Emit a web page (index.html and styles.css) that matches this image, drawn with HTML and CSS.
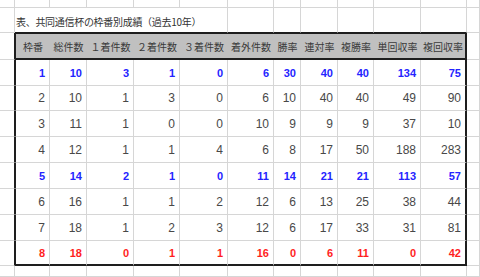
FILE: index.html
```html
<!DOCTYPE html>
<html lang="ja">
<head>
<meta charset="utf-8">
<link rel="stylesheet" href="styles.css">
</head>
<body>
<div class="sheet">
  <!-- row 0 -->
  <div class="c"></div><div class="c"></div><div class="c"></div><div class="c"></div><div class="c"></div><div class="c"></div><div class="c"></div><div class="c"></div><div class="c"></div><div class="c"></div><div class="c"></div><div class="c"></div><div class="c"></div>
  <!-- title row -->
  <div class="c"></div>
  <div class="c title">表、共同通信杯の枠番別成績（過去10年）</div>
  <div class="c tb"></div><div class="c tb"></div><div class="c tb"></div><div class="c tb"></div><div class="c tb"></div><div class="c tb"></div>
  <div class="c"></div>
  <!-- header -->
  <div class="c la"></div>
  <div class="h lb">枠番</div><div class="h">総件数</div><div class="h">１着件数</div><div class="h">２着件数</div><div class="h">３着件数</div><div class="h">着外件数</div><div class="h">勝率</div><div class="h">連対率</div><div class="h">複勝率</div><div class="h">単回収率</div><div class="h rb">複回収率</div>
  <div class="c"></div>
  <!-- data 1 -->
  <div class="c la"></div>
  <div class="c n blue lb">1</div><div class="c n blue">10</div><div class="c n blue">3</div><div class="c n blue">1</div><div class="c n blue">0</div><div class="c n blue">6</div><div class="c n blue">30</div><div class="c n blue">40</div><div class="c n blue">40</div><div class="c n blue">134</div><div class="c n blue rb">75</div>
  <div class="c"></div>
  <!-- data 2 -->
  <div class="c la"></div>
  <div class="c n lb">2</div><div class="c n">10</div><div class="c n">1</div><div class="c n">3</div><div class="c n">0</div><div class="c n">6</div><div class="c n">10</div><div class="c n">40</div><div class="c n">40</div><div class="c n">49</div><div class="c n rb">90</div>
  <div class="c"></div>
  <!-- data 3 -->
  <div class="c la"></div>
  <div class="c n lb">3</div><div class="c n">11</div><div class="c n">1</div><div class="c n">0</div><div class="c n">0</div><div class="c n">10</div><div class="c n">9</div><div class="c n">9</div><div class="c n">9</div><div class="c n">37</div><div class="c n rb">10</div>
  <div class="c"></div>
  <!-- data 4 -->
  <div class="c la"></div>
  <div class="c n lb">4</div><div class="c n">12</div><div class="c n">1</div><div class="c n">1</div><div class="c n">4</div><div class="c n">6</div><div class="c n">8</div><div class="c n">17</div><div class="c n">50</div><div class="c n">188</div><div class="c n rb">283</div>
  <div class="c"></div>
  <!-- data 5 -->
  <div class="c la"></div>
  <div class="c n blue lb">5</div><div class="c n blue">14</div><div class="c n blue">2</div><div class="c n blue">1</div><div class="c n blue">0</div><div class="c n blue">11</div><div class="c n blue">14</div><div class="c n blue">21</div><div class="c n blue">21</div><div class="c n blue">113</div><div class="c n blue rb">57</div>
  <div class="c"></div>
  <!-- data 6 -->
  <div class="c la"></div>
  <div class="c n lb">6</div><div class="c n">16</div><div class="c n">1</div><div class="c n">1</div><div class="c n">2</div><div class="c n">12</div><div class="c n">6</div><div class="c n">13</div><div class="c n">25</div><div class="c n">38</div><div class="c n rb">44</div>
  <div class="c"></div>
  <!-- data 7 -->
  <div class="c la"></div>
  <div class="c n lb">7</div><div class="c n">18</div><div class="c n">1</div><div class="c n">2</div><div class="c n">3</div><div class="c n">12</div><div class="c n">6</div><div class="c n">17</div><div class="c n">33</div><div class="c n">31</div><div class="c n rb">81</div>
  <div class="c"></div>
  <!-- data 8 -->
  <div class="c la"></div>
  <div class="c n red lb bb">8</div><div class="c n red bb">18</div><div class="c n red bb">0</div><div class="c n red bb">1</div><div class="c n red bb">1</div><div class="c n red bb">16</div><div class="c n red bb">0</div><div class="c n red bb">6</div><div class="c n red bb">11</div><div class="c n red bb">0</div><div class="c n red rb bb">42</div>
  <div class="c"></div>
  <!-- bottom row -->
  <div class="c"></div><div class="c"></div><div class="c"></div><div class="c"></div><div class="c"></div><div class="c"></div><div class="c"></div><div class="c"></div><div class="c"></div><div class="c"></div><div class="c"></div><div class="c"></div><div class="c"></div>
</div>
</body>
</html>
```

FILE: styles.css
```css
html, body {
  margin: 0;
  padding: 0;
  background: #ffffff;
}

body {
  width: 480px;
  height: 277px;
  overflow: hidden;
  font-family: "Noto Sans CJK JP", "Liberation Sans", sans-serif;
}

.sheet {
  display: grid;
  grid-template-columns: 15px 35px 37px 47px 46px 48px 46px 27px 37px 36px 47px 46px 1fr;
  grid-template-rows: 8px 25px 27px 26px 25px 26px 26px 26px 26px 26px 25px 1fr;
  height: 277px;
}

.c {
  box-sizing: border-box;
  border-right: 1px solid #d6d6d6;
  border-bottom: 1px solid #d6d6d6;
}

.title {
  grid-column: span 5;
  border-bottom-color: #1e1e1e;
  font-size: 10px;
  letter-spacing: -0.3px;
  color: #333333;
  display: flex;
  align-items: center;
  padding-left: 1px;
  padding-top: 2px;
  white-space: nowrap;
}

.tb {
  border-bottom-color: #1e1e1e;
}

.la {
  border-right-color: #1e1e1e;
}

.h {
  box-sizing: border-box;
  background: #c0c0c0;
  border-top: 1px solid #1e1e1e;
  border-bottom: 2px solid #1e1e1e;
  font-size: 10px;
  color: #3a3a3a;
  display: flex;
  align-items: center;
  justify-content: center;
  white-space: nowrap;
  padding-top: 1px;
}

.lb {
  border-left: 1px solid #1e1e1e;
}

.rb {
  border-right: 2px solid #1e1e1e;
}

.bb {
  border-bottom: 2px solid #1e1e1e;
}

.n {
  display: flex;
  align-items: center;
  justify-content: flex-end;
  padding-right: 4px;
  font-family: "Liberation Sans", sans-serif;
  font-size: 12px;
  color: #484848;
}

.blue {
  color: #2424ff;
  font-weight: bold;
  font-size: 11px;
}

.red {
  color: #ff1e1e;
  font-weight: bold;
  font-size: 11px;
}
```
